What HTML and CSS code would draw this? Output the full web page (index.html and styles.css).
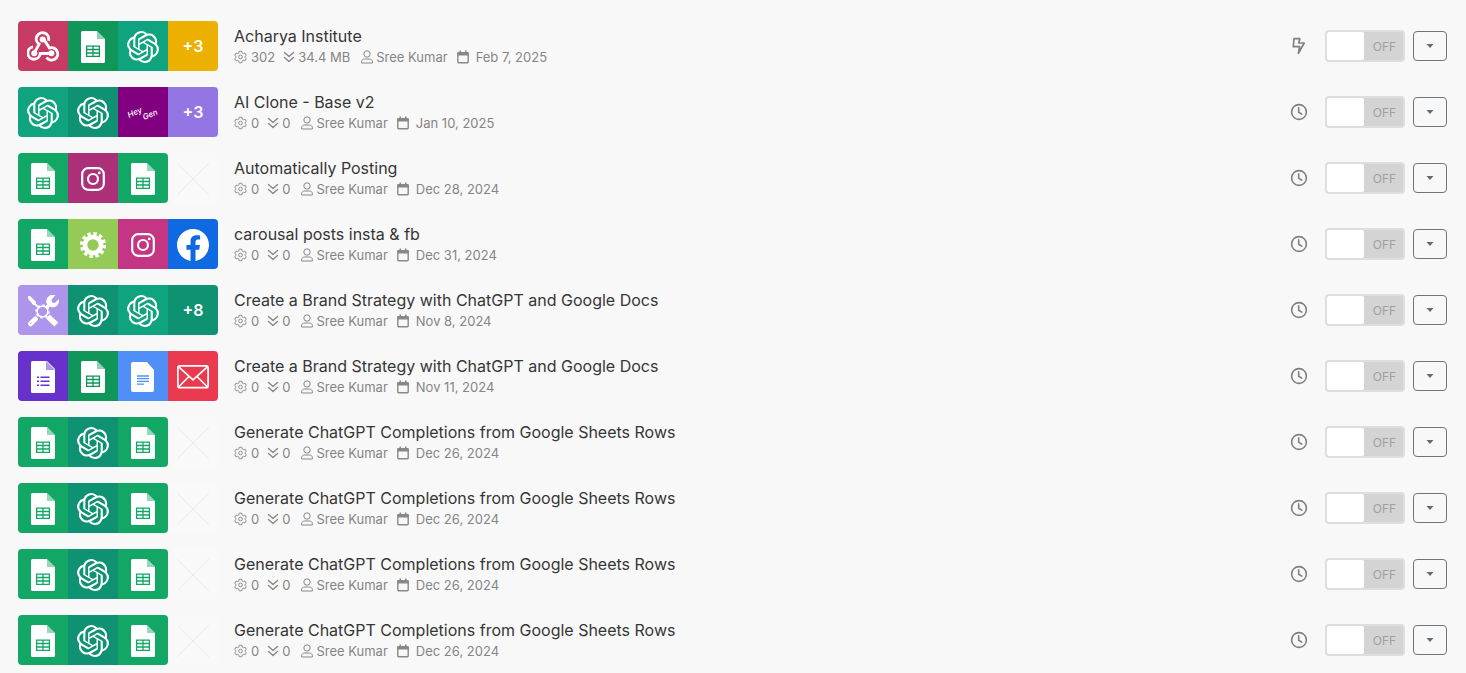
FILE: index.html
```html
<!DOCTYPE html>
<html lang="en">
<head>
<meta charset="utf-8">
<meta name="viewport" content="width=device-width, initial-scale=1">
<title>Scenarios</title>
<link rel="stylesheet" href="styles.css">
</head>
<body>
<svg class="sprite" aria-hidden="true">
  <symbol id="gpt" viewBox="0 0 24 24"><path fill="currentColor" d="M22.2819 9.8211a5.9847 5.9847 0 0 0-.5157-4.9108 6.0462 6.0462 0 0 0-6.5098-2.9A6.0651 6.0651 0 0 0 4.9807 4.1818a5.9847 5.9847 0 0 0-3.9977 2.9 6.0462 6.0462 0 0 0 .7427 7.0966 5.98 5.98 0 0 0 .511 4.9107 6.051 6.051 0 0 0 6.5146 2.9001A5.9847 5.9847 0 0 0 13.2599 24a6.0557 6.0557 0 0 0 5.7718-4.2058 5.9894 5.9894 0 0 0 3.9977-2.9001 6.0557 6.0557 0 0 0-.7475-7.0729zm-9.022 12.6081a4.4755 4.4755 0 0 1-2.8764-1.0408l.1419-.0804 4.7783-2.7582a.7948.7948 0 0 0 .3927-.6813v-6.7369l2.02 1.1686a.071.071 0 0 1 .038.0615v5.5826a4.504 4.504 0 0 1-4.4945 4.4944zm-9.6607-4.1254a4.4708 4.4708 0 0 1-.5346-3.0137l.142.0852 4.783 2.7582a.7712.7712 0 0 0 .7806 0l5.8428-3.3685v2.3324a.0804.0804 0 0 1-.0332.0615L9.74 19.9502a4.4992 4.4992 0 0 1-6.1408-1.6464zM2.3408 7.8956a4.485 4.485 0 0 1 2.3655-1.9728V11.6a.7664.7664 0 0 0 .3879.6765l5.8144 3.3543-2.0201 1.1685a.0757.0757 0 0 1-.071 0l-4.8303-2.7865A4.504 4.504 0 0 1 2.3408 7.872zm16.5963 3.8558L13.1038 8.364 15.1192 7.2a.0757.0757 0 0 1 .071 0l4.8303 2.7913a4.4944 4.4944 0 0 1-.6765 8.1042v-5.6772a.79.79 0 0 0-.407-.667zm2.0107-3.0231l-.142-.0852-4.7735-2.7818a.7759.7759 0 0 0-.7854 0L9.409 9.2297V6.8974a.0662.0662 0 0 1 .0284-.0615l4.8303-2.7866a4.4992 4.4992 0 0 1 6.6802 4.66zM8.3065 12.863l-2.02-1.1638a.0804.0804 0 0 1-.038-.0567V6.0742a4.4992 4.4992 0 0 1 7.3757-3.4537l-.142.0805L8.704 5.459a.7948.7948 0 0 0-.3927.6813zm1.0976-2.3654l2.602-1.4998 2.6069 1.4998v2.9994l-2.5974 1.4997-2.6067-1.4997Z"/></symbol>
  <symbol id="sheet" viewBox="0 0 32 32">
    <path fill="#fff" d="M5.500 0H20l8 8v22.500a1.500 1.500 0 0 1-1.500 1.500h-21A1.500 1.500 0 0 1 4 30.500v-29A1.500 1.500 0 0 1 5.500 0z"/><path fill="currentColor" opacity=".45" d="M20 0l8 8h-8z"/>
    <path fill="none" stroke="currentColor" stroke-width="1.300" d="M9.600 15.100h12.800v10.300H9.600zM16 15v10.400M9.600 18.500h12.800M9.600 22h12.800"/>
  </symbol>
  <symbol id="form" viewBox="0 0 32 32">
    <path fill="#fff" d="M5.500 0H20l8 8v22.500a1.500 1.500 0 0 1-1.500 1.500h-21A1.500 1.500 0 0 1 4 30.500v-29A1.500 1.500 0 0 1 5.500 0z"/><path fill="currentColor" opacity=".5" d="M19 0l9 9h-9z"/>
    <path fill="none" stroke="currentColor" stroke-width="1.600" d="M10 16.200h2M13.500 16.200h9M10 20.200h2M13.500 20.200h9M10 24.200h2M13.500 24.200h9"/>
  </symbol>
  <symbol id="doc" viewBox="0 0 32 32">
    <path fill="#fff" d="M6 1h14l7 8v20a2 2 0 0 1-2 2H6a2 2 0 0 1-2-2V3a2 2 0 0 1 2-2z"/>
    <path fill="none" stroke="currentColor" stroke-width="1.300" d="M10 15h12M10 17.700h12M10 20.400h12M10 23.100h7"/>
  </symbol>
  <symbol id="webhook" viewBox="0 0 32 32"><g fill="none" stroke="#fff" stroke-width="2.900">
    <path d="M21.400 9.800a6.200 6.200 0 1 0-9.300 3.300L7.800 21"/><path d="M6 15.900a6.200 6.200 0 1 0 7.200 6.600H24"/><path d="M17 8.500l5.500 8.500a6.200 6.200 0 1 1-3 9.500"/></g>
    <circle cx="15.700" cy="8.500" r="3" fill="#fff"/><circle cx="7.300" cy="22.200" r="3" fill="#fff"/><circle cx="24.400" cy="22.200" r="3" fill="#fff"/></symbol>
  <symbol id="insta" viewBox="0 0 32 32"><rect x="5.200" y="5.200" width="21.600" height="21.600" rx="6" fill="none" stroke="#fff" stroke-width="2.200"/><circle cx="16" cy="16" r="5" fill="none" stroke="#fff" stroke-width="2.200"/><circle cx="22.200" cy="9.900" r="1.400" fill="#fff"/></symbol>
  <symbol id="gear" viewBox="0 0 32 32"><circle cx="16" cy="16" r="8" fill="none" stroke="#fff" stroke-width="4.600"/><circle cx="16" cy="16" r="11.400" fill="none" stroke="#fff" stroke-width="3.400" stroke-dasharray="3.400 2.569"/></symbol>
  <symbol id="fb" viewBox="0 0 24 24"><path fill="#fff" d="M24 12.073c0-6.627-5.373-12-12-12s-12 5.373-12 12c0 5.990 4.388 10.954 10.125 11.854v-8.385H7.078v-3.470h3.047V9.430c0-3.007 1.792-4.669 4.533-4.669 1.312 0 2.686.235 2.686.235v2.953H15.830c-1.491 0-1.956.925-1.956 1.874v2.250h3.328l-.532 3.470h-2.796v8.385C19.612 23.027 24 18.062 24 12.073z"/></symbol>
  <symbol id="tools" viewBox="0 0 32 32"><g fill="none" stroke="#fff"><circle cx="15.500" cy="16.500" r="5.400" stroke-width="1.600"/><circle cx="15.500" cy="16.500" r="6.600" stroke-width="1.400" stroke-dasharray="2.300 2.847"/>
    <path stroke-width="1.800" d="M6 7l5 5"/><path stroke-width="3.400" d="M19.500 12.500l4-4"/><path stroke-width="5" stroke-linecap="round" d="M3.600 28.800l4.700-4.800"/><path stroke-width="5.600" d="M20.800 21.500l8.500 8"/></g>
    <path fill="#fff" d="M.8 1.400l2-.6 6.200 6-.2 3-2.200.4-5.200-6zM28.400 0l-4 5 .8 2.400 2.600.7 4-3.800c1 6.200-4 9.600-8.500 7.400l-4-3.800c-1-5 4-9.800 9.100-7.900z"/><path stroke="currentColor" stroke-width="1" d="M3.200 29l1.600-1.600"/></symbol>
  <symbol id="mail" viewBox="0 0 32 32"><g fill="none" stroke="#fff" stroke-width="1.700"><rect x=".9" y="4.900" width="30.200" height="21.800" rx="2"/><path d="M1.400 5.700L16 18.800 30.600 5.700M1.500 26L12 15.500M30.500 26L20 15.500"/></g></symbol>
  <symbol id="empty" viewBox="0 0 32 32"><path stroke="#ececec" d="M0 0l32 32M32 0L0 32"/></symbol>
  <symbol id="ops" viewBox="0 0 14 14"><g fill="none" stroke="currentColor" stroke-linejoin="round"><path d="M5.600.8h2.800l.4 1.900 1.200.7 1.800-.6 1.400 2.400L11.800 6.500v1l1.400 1.300-1.400 2.400-1.800-.6-1.200.7-.4 1.900H5.600l-.4-1.900-1.200-.7-1.800.6L.8 8.800l1.400-1.300v-1L.8 5.200l1.400-2.400 1.800.6 1.200-.7z"/><circle cx="7" cy="7" r="2"/></g></symbol>
  <symbol id="data" viewBox="0 0 12 14"><path fill="none" stroke="currentColor" stroke-width="1.400" stroke-linecap="round" stroke-linejoin="round" d="M1.500 2.500L6 6.500l4.500-4M1.500 7.500L6 11.500l4.500-4"/></symbol>
  <symbol id="user" viewBox="0 0 12 14"><g fill="none" stroke="currentColor"><circle cx="6" cy="4" r="3.200"/><path d="M.6 13v-1.200C.6 10 2 9 3.700 9h4.600c1.700 0 3.100 1 3.100 2.800V13z" stroke-linejoin="round"/></g></symbol>
  <symbol id="cal" viewBox="0 0 12 14"><path fill="none" stroke="currentColor" stroke-width="1.400" d="M.8 3.500h10.400V12a.7.7 0 0 1-.7.7h-9a.7.7 0 0 1-.7-.7z"/><path fill="currentColor" d="M.2 5.600V3.200c0-.7.500-1.200 1.200-1.200H2.500V.5H4V2h4V.5h1.500V2h1.100c.7 0 1.200.5 1.200 1.200v2.400z"/></symbol>
  <symbol id="clock" viewBox="0 0 18 18"><g fill="none" stroke="currentColor" stroke-width="1.600" stroke-linecap="round"><circle cx="9" cy="9" r="7.400"/><path d="M8.700 4.800v4.400l3 2"/></g></symbol>
  <symbol id="bolt" viewBox="0 0 18 18"><path fill="none" stroke="currentColor" stroke-width="1.700" stroke-linejoin="round" d="M4 1.700h5.800L8.800 6h5.400L8.400 16.400l1.200-6.700H3.300z"/></symbol>
  <symbol id="caret" viewBox="0 0 8 4"><path fill="currentColor" d="M.5 0h7L4 4z"/></symbol>
</svg>
<main class="list">
  <article class="row">
    <div class="apps"><span class="app hook"><svg><use href="#webhook"/></svg></span><span class="app sheet-dark"><svg><use href="#sheet"/></svg></span><span class="app gpt"><svg><use href="#gpt"/></svg></span><span class="app more amber">+3</span></div>
    <div class="info"><h2>Acharya Institute</h2><div class="meta"><span class="ops"><svg><use href="#ops"/></svg>302</span><span class="data"><svg><use href="#data"/></svg>34.4 MB</span><span class="user"><svg><use href="#user"/></svg>Sree Kumar</span><span class="date"><svg><use href="#cal"/></svg>Feb 7, 2025</span></div></div>
    <svg class="trigger"><use href="#bolt"/></svg><label class="toggle"><input type="checkbox" aria-label="Acharya Institute"><span>OFF</span></label><button class="menu" aria-label="Options"><svg><use href="#caret"/></svg></button>
  </article>
  <article class="row">
    <div class="apps"><span class="app gpt"><svg><use href="#gpt"/></svg></span><span class="app gpt-dark"><svg><use href="#gpt"/></svg></span><span class="app hey"><svg viewBox="0 0 32 32"><text class="script" transform="rotate(-24 2 21)" x="2" y="21">Hey</text><text class="script" transform="rotate(-22 17 23)" x="17" y="23">Gen</text></svg></span><span class="app more violet">+3</span></div>
    <div class="info"><h2>AI Clone - Base v2</h2><div class="meta"><span class="ops"><svg><use href="#ops"/></svg>0</span><span class="data"><svg><use href="#data"/></svg>0</span><span class="user"><svg><use href="#user"/></svg>Sree Kumar</span><span class="date"><svg><use href="#cal"/></svg>Jan 10, 2025</span></div></div>
    <svg class="trigger"><use href="#clock"/></svg><label class="toggle"><input type="checkbox" aria-label="AI Clone - Base v2"><span>OFF</span></label><button class="menu" aria-label="Options"><svg><use href="#caret"/></svg></button>
  </article>
  <article class="row">
    <div class="apps"><span class="app sheet"><svg><use href="#sheet"/></svg></span><span class="app insta-dark"><svg><use href="#insta"/></svg></span><span class="app sheet last"><svg><use href="#sheet"/></svg></span><span class="app none"><svg><use href="#empty"/></svg></span></div>
    <div class="info"><h2>Automatically Posting</h2><div class="meta"><span class="ops"><svg><use href="#ops"/></svg>0</span><span class="data"><svg><use href="#data"/></svg>0</span><span class="user"><svg><use href="#user"/></svg>Sree Kumar</span><span class="date"><svg><use href="#cal"/></svg>Dec 28, 2024</span></div></div>
    <svg class="trigger"><use href="#clock"/></svg><label class="toggle"><input type="checkbox" aria-label="Automatically Posting"><span>OFF</span></label><button class="menu" aria-label="Options"><svg><use href="#caret"/></svg></button>
  </article>
  <article class="row">
    <div class="apps"><span class="app sheet"><svg><use href="#sheet"/></svg></span><span class="app lime"><svg><use href="#gear"/></svg></span><span class="app insta"><svg><use href="#insta"/></svg></span><span class="app fb"><svg><use href="#fb"/></svg></span></div>
    <div class="info"><h2>carousal posts insta &amp; fb</h2><div class="meta"><span class="ops"><svg><use href="#ops"/></svg>0</span><span class="data"><svg><use href="#data"/></svg>0</span><span class="user"><svg><use href="#user"/></svg>Sree Kumar</span><span class="date"><svg><use href="#cal"/></svg>Dec 31, 2024</span></div></div>
    <svg class="trigger"><use href="#clock"/></svg><label class="toggle"><input type="checkbox" aria-label="carousal posts insta &amp; fb"><span>OFF</span></label><button class="menu" aria-label="Options"><svg><use href="#caret"/></svg></button>
  </article>
  <article class="row">
    <div class="apps"><span class="app tools"><svg><use href="#tools"/></svg></span><span class="app gpt-dark"><svg><use href="#gpt"/></svg></span><span class="app gpt"><svg><use href="#gpt"/></svg></span><span class="app more gpt-dark">+8</span></div>
    <div class="info"><h2>Create a Brand Strategy with ChatGPT and Google Docs</h2><div class="meta"><span class="ops"><svg><use href="#ops"/></svg>0</span><span class="data"><svg><use href="#data"/></svg>0</span><span class="user"><svg><use href="#user"/></svg>Sree Kumar</span><span class="date"><svg><use href="#cal"/></svg>Nov 8, 2024</span></div></div>
    <svg class="trigger"><use href="#clock"/></svg><label class="toggle"><input type="checkbox" aria-label="Create a Brand Strategy with ChatGPT and Google Docs"><span>OFF</span></label><button class="menu" aria-label="Options"><svg><use href="#caret"/></svg></button>
  </article>
  <article class="row">
    <div class="apps"><span class="app form"><svg><use href="#form"/></svg></span><span class="app sheet-dark"><svg><use href="#sheet"/></svg></span><span class="app doc"><svg><use href="#doc"/></svg></span><span class="app mail"><svg><use href="#mail"/></svg></span></div>
    <div class="info"><h2>Create a Brand Strategy with ChatGPT and Google Docs</h2><div class="meta"><span class="ops"><svg><use href="#ops"/></svg>0</span><span class="data"><svg><use href="#data"/></svg>0</span><span class="user"><svg><use href="#user"/></svg>Sree Kumar</span><span class="date"><svg><use href="#cal"/></svg>Nov 11, 2024</span></div></div>
    <svg class="trigger"><use href="#clock"/></svg><label class="toggle"><input type="checkbox" aria-label="Create a Brand Strategy with ChatGPT and Google Docs"><span>OFF</span></label><button class="menu" aria-label="Options"><svg><use href="#caret"/></svg></button>
  </article>
  <article class="row">
    <div class="apps"><span class="app sheet"><svg><use href="#sheet"/></svg></span><span class="app gpt-dark"><svg><use href="#gpt"/></svg></span><span class="app sheet last"><svg><use href="#sheet"/></svg></span><span class="app none"><svg><use href="#empty"/></svg></span></div>
    <div class="info"><h2>Generate ChatGPT Completions from Google Sheets Rows</h2><div class="meta"><span class="ops"><svg><use href="#ops"/></svg>0</span><span class="data"><svg><use href="#data"/></svg>0</span><span class="user"><svg><use href="#user"/></svg>Sree Kumar</span><span class="date"><svg><use href="#cal"/></svg>Dec 26, 2024</span></div></div>
    <svg class="trigger"><use href="#clock"/></svg><label class="toggle"><input type="checkbox" aria-label="Generate ChatGPT Completions from Google Sheets Rows"><span>OFF</span></label><button class="menu" aria-label="Options"><svg><use href="#caret"/></svg></button>
  </article>
  <article class="row">
    <div class="apps"><span class="app sheet"><svg><use href="#sheet"/></svg></span><span class="app gpt-dark"><svg><use href="#gpt"/></svg></span><span class="app sheet last"><svg><use href="#sheet"/></svg></span><span class="app none"><svg><use href="#empty"/></svg></span></div>
    <div class="info"><h2>Generate ChatGPT Completions from Google Sheets Rows</h2><div class="meta"><span class="ops"><svg><use href="#ops"/></svg>0</span><span class="data"><svg><use href="#data"/></svg>0</span><span class="user"><svg><use href="#user"/></svg>Sree Kumar</span><span class="date"><svg><use href="#cal"/></svg>Dec 26, 2024</span></div></div>
    <svg class="trigger"><use href="#clock"/></svg><label class="toggle"><input type="checkbox" aria-label="Generate ChatGPT Completions from Google Sheets Rows"><span>OFF</span></label><button class="menu" aria-label="Options"><svg><use href="#caret"/></svg></button>
  </article>
  <article class="row">
    <div class="apps"><span class="app sheet"><svg><use href="#sheet"/></svg></span><span class="app gpt-dark"><svg><use href="#gpt"/></svg></span><span class="app sheet last"><svg><use href="#sheet"/></svg></span><span class="app none"><svg><use href="#empty"/></svg></span></div>
    <div class="info"><h2>Generate ChatGPT Completions from Google Sheets Rows</h2><div class="meta"><span class="ops"><svg><use href="#ops"/></svg>0</span><span class="data"><svg><use href="#data"/></svg>0</span><span class="user"><svg><use href="#user"/></svg>Sree Kumar</span><span class="date"><svg><use href="#cal"/></svg>Dec 26, 2024</span></div></div>
    <svg class="trigger"><use href="#clock"/></svg><label class="toggle"><input type="checkbox" aria-label="Generate ChatGPT Completions from Google Sheets Rows"><span>OFF</span></label><button class="menu" aria-label="Options"><svg><use href="#caret"/></svg></button>
  </article>
  <article class="row">
    <div class="apps"><span class="app sheet"><svg><use href="#sheet"/></svg></span><span class="app gpt-dark"><svg><use href="#gpt"/></svg></span><span class="app sheet last"><svg><use href="#sheet"/></svg></span><span class="app none"><svg><use href="#empty"/></svg></span></div>
    <div class="info"><h2>Generate ChatGPT Completions from Google Sheets Rows</h2><div class="meta"><span class="ops"><svg><use href="#ops"/></svg>0</span><span class="data"><svg><use href="#data"/></svg>0</span><span class="user"><svg><use href="#user"/></svg>Sree Kumar</span><span class="date"><svg><use href="#cal"/></svg>Dec 26, 2024</span></div></div>
    <svg class="trigger"><use href="#clock"/></svg><label class="toggle"><input type="checkbox" aria-label="Generate ChatGPT Completions from Google Sheets Rows"><span>OFF</span></label><button class="menu" aria-label="Options"><svg><use href="#caret"/></svg></button>
  </article>
</main>
</body>
</html>
```
FILE: styles.css
```css
* { box-sizing: border-box; }
body { margin: 0; background: #f8f8f8; color: #363636; font-family: Inter, "Liberation Sans", sans-serif; }
.sprite { display: block; width: 0; height: 0; }
.list { display: flex; flex-direction: column; gap: 16px; padding: 21px 19px 8px 18px; }
.row { display: flex; align-items: center; }
.apps { display: flex; flex: none; border-radius: 4px; overflow: hidden; }
.app { display: flex; align-items: center; justify-content: center; width: 50px; height: 50px; padding-top: 2px; color: #fff; }
.app svg { width: 32px; height: 32px; }
.more { padding-top: 0; font-size: 16px; font-weight: 600; }
.hook { background: #c73a63; }
.sheet-dark { background: #0f9658; }
.sheet { background: #12a765; }
.sheet-dark svg { color: #0f9658; }
.sheet svg { color: #12a765; }
.gpt { background: #10a37f; }
.gpt-dark { background: #0f9272; }
.amber { background: #ecb000; }
.violet { background: #9475e4; }
.hey { background: #800080; }
.insta-dark { background: #ab3078; }
.insta { background: #c43584; }
.lime { background: #93cb56; }
.fb { background: #0f69e3; }
.tools { background: #ac95ea; }
.tools svg { color: #ac95ea; }
.form { background: #6632cb; }
.form svg { color: #6632cb; }
.doc { background: #4f8ff7; }
.doc svg { color: #4f8ff7; }
.mail { background: #e93a50; }
.last { border-radius: 0 4px 4px 0; }
.none { background: #f9f9f9; }
.script { font: italic 500 8px Inter, sans-serif; fill: #fff; }
.info { flex: 1; min-width: 0; padding-left: 16px; }
h2 { margin: 0; font-size: 16px; line-height: 22px; font-weight: 400; }
.meta { display: flex; color: #858585; font-size: 13px; line-height: 20px; }
.meta span { display: flex; align-items: center; gap: 3px; }
.meta svg { width: 12px; height: 14px; color: #888; }
.meta .ops svg { width: 13px; }
.meta .ops { gap: 4px; }
.data { margin-left: 8px; }
.user { margin-left: 11px; }
.date { margin-left: 9px; }
.meta .date { gap: 7px; }
.trigger { flex: none; width: 18px; height: 18px; margin-right: 17px; color: #808080; }
.toggle { display: flex; align-items: center; flex: none; width: 80px; height: 32px; border: 2px solid #dedede; border-radius: 4px; background: #d4d4d4; color: #a0a0a0; font-size: 12px; cursor: pointer; }
.toggle input { appearance: none; flex: none; width: 37px; height: 28px; margin: 0; border-radius: 2px; background: #fff; }
.toggle span { flex: 1; padding-left: 2px; text-align: center; }
.menu { display: flex; align-items: center; justify-content: center; flex: none; width: 34px; height: 30px; margin-left: 8px; padding: 0; border: 1px solid #6c757d; border-radius: 4px; background: transparent; color: #5f6b76; cursor: pointer; }
.menu svg { width: 8px; height: 4px; }
```
